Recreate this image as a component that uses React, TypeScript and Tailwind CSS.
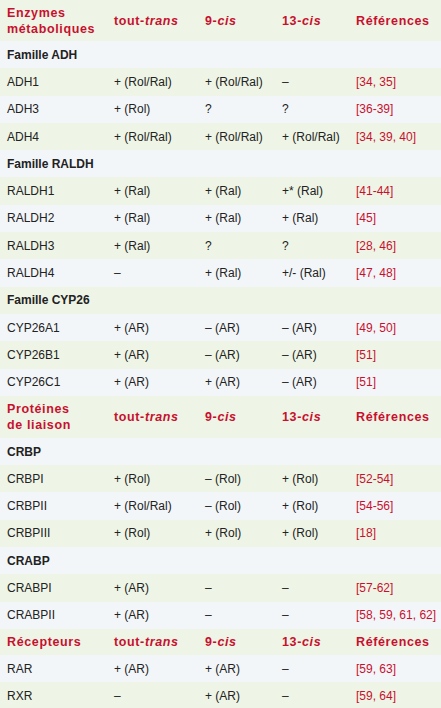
import React from 'react';

type Row =
  | { kind: 'head'; label: React.ReactNode; h: string }
  | { kind: 'family'; label: string }
  | { kind: 'item'; cells: [string, string, string, string, string] };

const ROWS: Row[] = [
  { kind: 'head', label: <>Enzymes<br />métaboliques</>, h: 'h-[41px]' },
  { kind: 'family', label: 'Famille ADH' },
  { kind: 'item', cells: ['ADH1', '+ (Rol/Ral)', '+ (Rol/Ral)', '–', '[34, 35]'] },
  { kind: 'item', cells: ['ADH3', '+ (Rol)', '?', '?', '[36-39]'] },
  { kind: 'item', cells: ['ADH4', '+ (Rol/Ral)', '+ (Rol/Ral)', '+ (Rol/Ral)', '[34, 39, 40]'] },
  { kind: 'family', label: 'Famille RALDH' },
  { kind: 'item', cells: ['RALDH1', '+ (Ral)', '+ (Ral)', '+* (Ral)', '[41-44]'] },
  { kind: 'item', cells: ['RALDH2', '+ (Ral)', '+ (Ral)', '+ (Ral)', '[45]'] },
  { kind: 'item', cells: ['RALDH3', '+ (Ral)', '?', '?', '[28, 46]'] },
  { kind: 'item', cells: ['RALDH4', '–', '+ (Ral)', '+/- (Ral)', '[47, 48]'] },
  { kind: 'family', label: 'Famille CYP26' },
  { kind: 'item', cells: ['CYP26A1', '+ (AR)', '– (AR)', '– (AR)', '[49, 50]'] },
  { kind: 'item', cells: ['CYP26B1', '+ (AR)', '– (AR)', '– (AR)', '[51]'] },
  { kind: 'item', cells: ['CYP26C1', '+ (AR)', '+ (AR)', '– (AR)', '[51]'] },
  { kind: 'head', label: <>Protéines<br />de liaison</>, h: 'h-[42px]' },
  { kind: 'family', label: 'CRBP' },
  { kind: 'item', cells: ['CRBPI', '+ (Rol)', '– (Rol)', '+ (Rol)', '[52-54]'] },
  { kind: 'item', cells: ['CRBPII', '+ (Rol/Ral)', '– (Rol)', '+ (Rol)', '[54-56]'] },
  { kind: 'item', cells: ['CRBPIII', '+ (Rol)', '+ (Rol)', '+ (Rol)', '[18]'] },
  { kind: 'family', label: 'CRABP' },
  { kind: 'item', cells: ['CRABPI', '+ (AR)', '–', '–', '[57-62]'] },
  { kind: 'item', cells: ['CRABPII', '+ (AR)', '–', '–', '[58, 59, 61, 62]'] },
  { kind: 'head', label: 'Récepteurs', h: 'h-[26px]' },
  { kind: 'item', cells: ['RAR', '+ (AR)', '+ (AR)', '–', '[59, 63]'] },
  { kind: 'item', cells: ['RXR', '–', '+ (AR)', '–', '[59, 64]'] },
];

const GRID = 'grid grid-cols-[107px_91px_77px_74px_1fr] items-center px-[7px] whitespace-nowrap';
const HEAD_FONT = "font-['Liberation_Sans',sans-serif] font-bold text-[12.5px] tracking-[0.05em] text-[#c8102e]";
const BODY_FONT = "font-['Liberation_Sans_Narrow','Liberation_Sans',sans-serif] text-[12px] text-[#222]";

export default function App() {
  return (
    <div className="w-[441px] h-[708px] overflow-hidden bg-[#f3f6f9]">
      {ROWS.map((row, i) => {
        const bg = i % 2 === 0 ? 'bg-[#eef5e6]' : 'bg-[#f3f6f9]';
        if (row.kind === 'head') {
          return (
            <div key={i} className={`${GRID} ${bg} ${row.h} ${HEAD_FONT} leading-[16px]`}>
              <div>{row.label}</div>
              <div>tout-<i>trans</i></div>
              <div>9-<i>cis</i></div>
              <div>13-<i>cis</i></div>
              <div>Références</div>
            </div>
          );
        }
        if (row.kind === 'family') {
          return (
            <div key={i} className={`${GRID} ${bg} h-[27.3px] ${BODY_FONT} font-bold text-[#1a1a1a]`}>
              <div className="col-span-5">{row.label}</div>
            </div>
          );
        }
        return (
          <div key={i} className={`${GRID} ${bg} h-[27.3px] ${BODY_FONT}`}>
            {row.cells.map((c, j) => (
              <div key={j} className={j === 4 ? 'text-[#c8102e]' : ''}>{c}</div>
            ))}
          </div>
        );
      })}
    </div>
  );
}
